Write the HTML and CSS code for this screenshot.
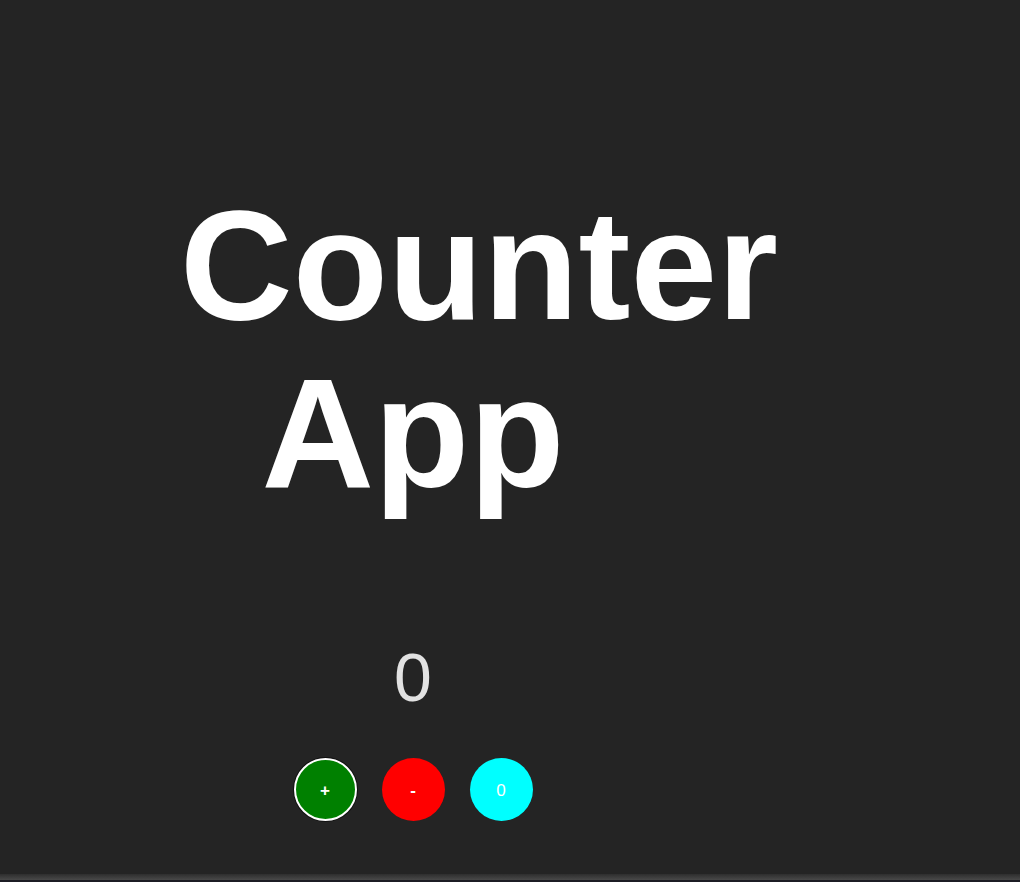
FILE: index.html
```html
<!DOCTYPE html>
<html lang="en">
<head>
<meta charset="utf-8">
<title>Counter App</title>
<link rel="stylesheet" href="styles.css">
</head>
<body>
  <main class="page">
    <div class="app">
      <h1 class="title">Counter App</h1>
      <div class="count">0</div>
      <div class="buttons">
        <button class="btn btn-inc">+</button>
        <button class="btn btn-dec">-</button>
        <button class="btn btn-reset">0</button>
      </div>
    </div>
  </main>
  <div class="bottom-bar"></div>
</body>
</html>
```

FILE: styles.css
```css
html, body {
  margin: 0;
  padding: 0;
}
body {
  background: #242424;
  font-family: "Liberation Sans", Arial, sans-serif;
  color: #ffffff;
  min-height: 882px;
  height: 882px;
  display: flex;
  flex-direction: column;
  overflow: hidden;
}
.page {
  flex: 1;
  display: flex;
}
.app {
  width: 466px;
  margin-left: 180px;
  padding-top: 181px;
  text-align: center;
}
.title {
  margin: 0;
  font-size: 156px;
  line-height: 168px;
  font-weight: 700;
  color: #ffffff;
}
.count {
  margin-top: 121px;
  font-size: 68px;
  line-height: 78px;
  color: rgba(255, 255, 255, 0.87);
}
.buttons {
  margin-top: 42px;
  display: flex;
  justify-content: center;
  gap: 25px;
}
.btn {
  width: 63px;
  height: 63px;
  border-radius: 50%;
  border: none;
  padding: 2px 0 0;
  font-family: "Liberation Sans", Arial, sans-serif;
  font-size: 17px;
  font-weight: 600;
  color: #ffffff;
  cursor: pointer;
}
.btn-inc {
  background: #008000;
  border: 2px solid #ffffff;
  box-shadow: 0 0 0 1px #111111;
}
.btn-dec {
  background: #ff0000;
}
.btn-reset {
  background: #00ffff;
  font-weight: 400;
}
.bottom-bar {
  height: 8px;
  background: linear-gradient(#2e2e2e, #474747 70%, #1c1c24 75%, #1c1c24);
}
```
